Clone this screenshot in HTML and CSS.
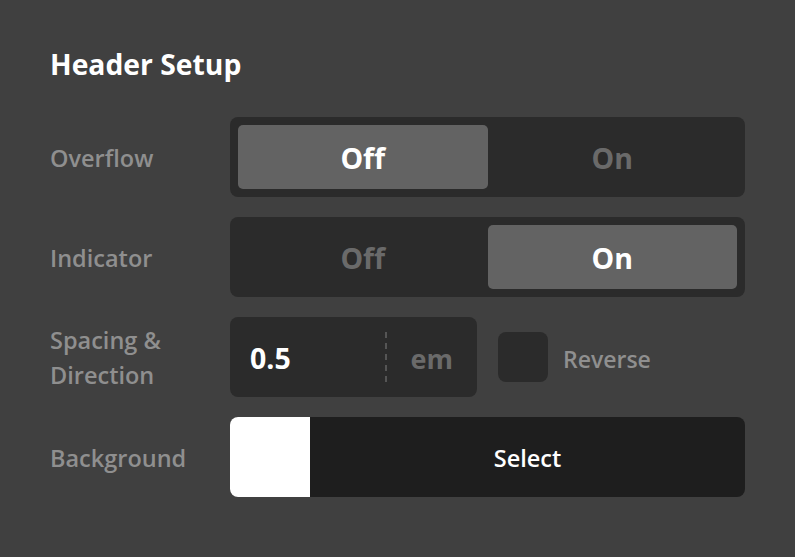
FILE: index.html
```html
<!DOCTYPE html>
<html>
<head>
<meta charset="utf-8">
<link rel="stylesheet" href="styles.css">
</head>
<body>
<div class="panel">
  <h1 class="title">Header Setup</h1>
  <div class="rows">
    <div class="row">
      <div class="label">Overflow</div>
      <div class="seg">
        <div class="seg-opt active">Off</div>
        <div class="seg-opt">On</div>
      </div>
    </div>
    <div class="row">
      <div class="label">Indicator</div>
      <div class="seg">
        <div class="seg-opt">Off</div>
        <div class="seg-opt active">On</div>
      </div>
    </div>
    <div class="row">
      <div class="label">Spacing &amp;<br>Direction</div>
      <div class="num">
        <div class="num-val">0.5</div>
        <div class="num-unit">em</div>
      </div>
      <div class="check"><div class="box"></div><span class="check-label">Reverse</span></div>
    </div>
    <div class="row">
      <div class="label">Background</div>
      <div class="color">
        <div class="swatch"></div>
        <div class="color-btn">Select</div>
      </div>
    </div>
  </div>
</div>
</body>
</html>
```
FILE: styles.css
```css
html, body {
  margin: 0;
  padding: 0;
  background: #404040;
  font-family: "Open Sans", "Noto Sans", sans-serif;
}
.panel {
  padding: 44px 50px 0 50px;
}
.title {
  margin: 0;
  color: #ffffff;
  font-size: 28.3px;
  font-weight: 700;
  line-height: 40px;
}
.rows {
  margin-top: 33px;
  display: flex;
  flex-direction: column;
  gap: 20px;
}
.row {
  display: flex;
  align-items: center;
  height: 80px;
}
.label {
  width: 180px;
  flex: none;
  padding-top: 2px;
  color: #8f8f8f;
  font-size: 23.5px;
  font-weight: 600;
  line-height: 35px;
}
.seg {
  width: 515px;
  height: 80px;
  box-sizing: border-box;
  padding: 8px;
  background: #2b2b2b;
  border-radius: 8px;
  display: flex;
}
.seg-opt {
  flex: 1;
  display: flex;
  align-items: center;
  justify-content: center;
  padding-top: 2px;
  border-radius: 5px;
  color: #6a6a6a;
  font-size: 28.5px;
  font-weight: 700;
}
.seg-opt.active {
  background: #636363;
  color: #ffffff;
}
.num {
  width: 247px;
  height: 80px;
  box-sizing: border-box;
  background: #2b2b2b;
  border-radius: 8px;
  display: flex;
  align-items: center;
}
.num-val {
  width: 155px;
  box-sizing: border-box;
  padding-left: 20px;
  padding-top: 2px;
  color: #ffffff;
  font-size: 28.5px;
  font-weight: 700;
}
.num-unit {
  flex: 1;
  height: 50px;
  display: flex;
  align-items: center;
  justify-content: flex-end;
  padding-right: 24px;
  padding-top: 2px;
  box-sizing: border-box;
  border-left: 2px dashed #555555;
  color: #6a6a6a;
  font-size: 27px;
  font-weight: 700;
}
.check {
  display: flex;
  align-items: center;
  margin-left: 21px;
  gap: 15px;
}
.box {
  width: 50px;
  height: 50px;
  background: #2b2b2b;
  border-radius: 8px;
}
.check-label {
  padding-top: 3px;
  color: #8f8f8f;
  font-size: 23px;
  font-weight: 600;
}
.color {
  width: 515px;
  height: 80px;
  display: flex;
  border-radius: 8px;
  overflow: hidden;
  background: #1e1e1e;
}
.swatch {
  width: 80px;
  background: #ffffff;
}
.color-btn {
  flex: 1;
  display: flex;
  align-items: center;
  justify-content: center;
  padding-top: 2px;
  color: #ffffff;
  font-size: 23.5px;
  font-weight: 600;
}
```
